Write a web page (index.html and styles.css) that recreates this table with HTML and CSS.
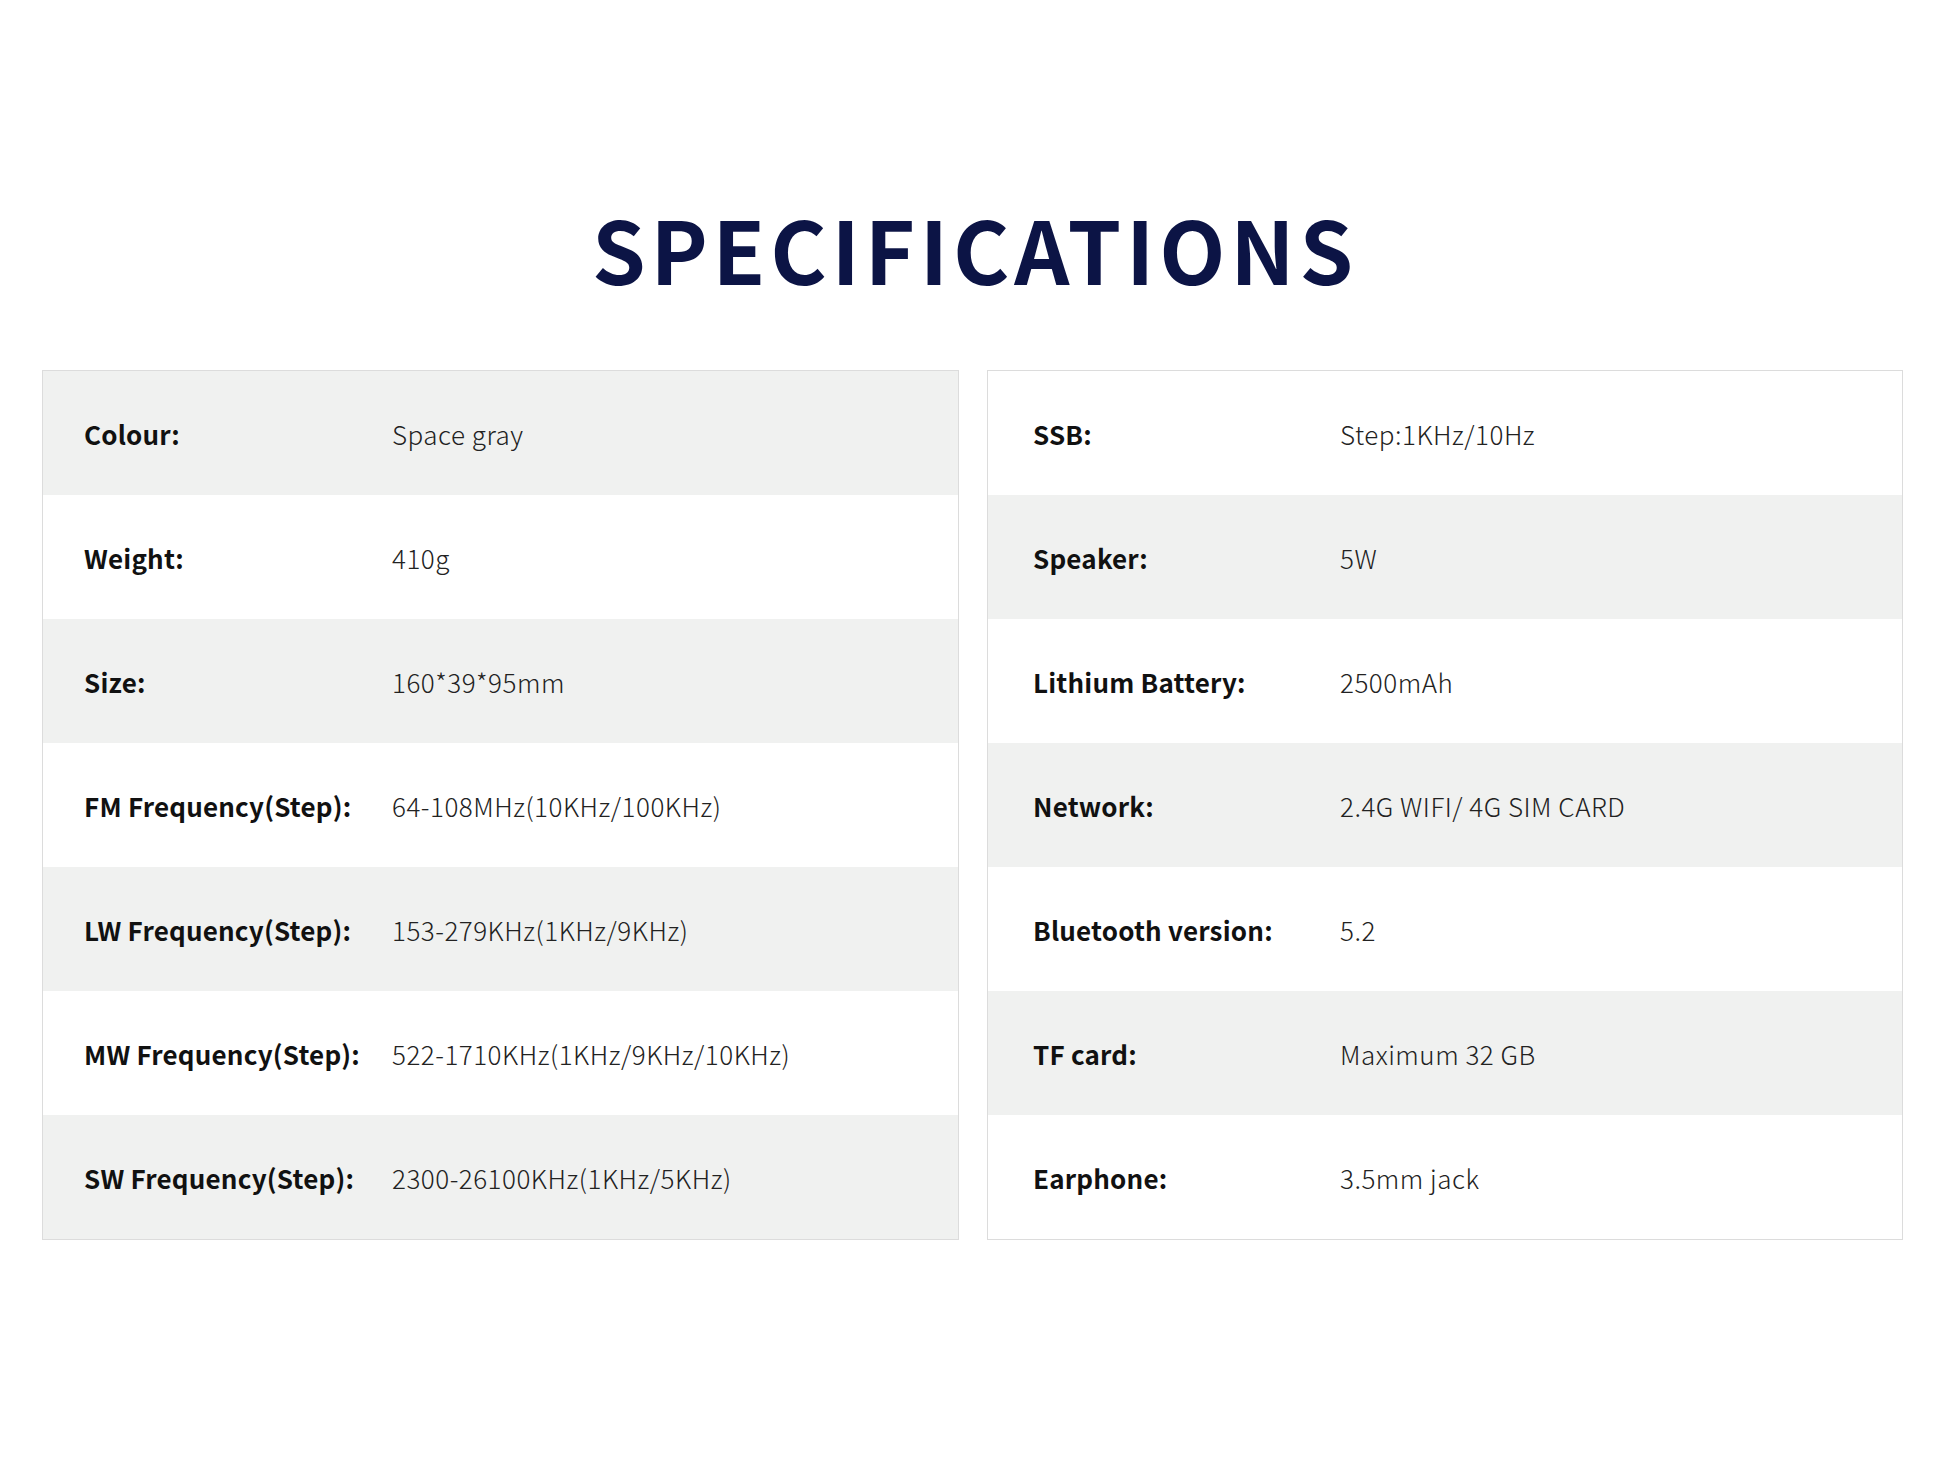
FILE: index.html
```html
<!DOCTYPE html>
<html lang="en">
<head>
<meta charset="utf-8">
<title>Specifications</title>
<link rel="stylesheet" href="styles.css">
</head>
<body>
<main class="page">
  <h1 class="title">SPECIFICATIONS</h1>
  <section class="tables">
    <div class="spec-table">
      <div class="row shade"><span class="label">Colour:</span><span class="value">Space gray</span></div>
      <div class="row"><span class="label">Weight:</span><span class="value">410g</span></div>
      <div class="row shade"><span class="label">Size:</span><span class="value">160*39*95mm</span></div>
      <div class="row"><span class="label">FM Frequency(Step):</span><span class="value">64-108MHz(10KHz/100KHz)</span></div>
      <div class="row shade"><span class="label">LW Frequency(Step):</span><span class="value">153-279KHz(1KHz/9KHz)</span></div>
      <div class="row"><span class="label">MW Frequency(Step):</span><span class="value">522-1710KHz(1KHz/9KHz/10KHz)</span></div>
      <div class="row shade"><span class="label">SW Frequency(Step):</span><span class="value">2300-26100KHz(1KHz/5KHz)</span></div>
    </div>
    <div class="spec-table right">
      <div class="row"><span class="label">SSB:</span><span class="value">Step:1KHz/10Hz</span></div>
      <div class="row shade"><span class="label">Speaker:</span><span class="value">5W</span></div>
      <div class="row"><span class="label">Lithium Battery:</span><span class="value">2500mAh</span></div>
      <div class="row shade"><span class="label">Network:</span><span class="value">2.4G WIFI/ 4G SIM CARD</span></div>
      <div class="row"><span class="label">Bluetooth version:</span><span class="value">5.2</span></div>
      <div class="row shade"><span class="label">TF card:</span><span class="value">Maximum 32 GB</span></div>
      <div class="row"><span class="label">Earphone:</span><span class="value">3.5mm jack</span></div>
    </div>
  </section>
</main>
</body>
</html>
```

FILE: styles.css
```css
html, body {
  margin: 0;
  padding: 0;
  background: #ffffff;
}

body {
  font-family: "Noto Sans CJK SC", "Noto Sans", sans-serif;
  color: #111;
}

.page {
  width: 1946px;
  height: 1460px;
  box-sizing: border-box;
  padding: 205px 43px 0 42px;
}

.title {
  margin: 0;
  text-align: center;
  font-size: 86px;
  line-height: 1;
  font-weight: 700;
  letter-spacing: 4.8px;
  text-indent: 4.8px;
  color: #0c1445;
}

.tables {
  margin-top: 79px;
  display: grid;
  grid-template-columns: 917px 916px;
  column-gap: 28px;
}

.spec-table {
  border: 1px solid #dcdcdc;
  display: flex;
  flex-direction: column;
}

.row {
  height: 124px;
  display: flex;
  align-items: center;
  background: #ffffff;
}

.row.shade {
  background: #f0f1f0;
}

.label {
  width: 308px;
  padding-left: 41px;
  font-size: 26px;
  font-weight: 700;
  letter-spacing: 0.2px;
  color: #111;
}

.value {
  font-size: 26px;
  font-weight: 300;
  letter-spacing: 0.5px;
  color: #222;
}

.right .label {
  width: 307px;
  padding-left: 45px;
}
```
